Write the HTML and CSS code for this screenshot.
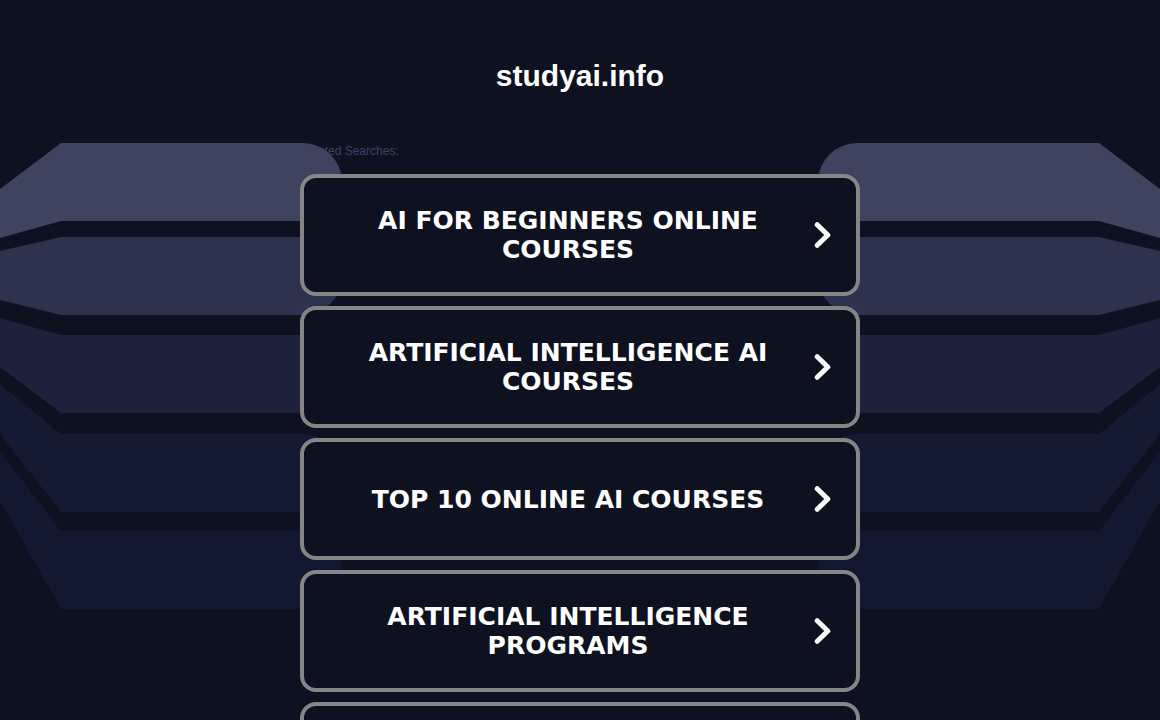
FILE: index.html
```
<!DOCTYPE html>
<html lang="en">

<head>
    <meta charset="UTF-8">
    <meta name="viewport" content="width=device-width, initial-scale=1.0">
    <title>studyai.info</title>
    <link rel="stylesheet" href="styles.css">
</head>

<body>
    <header class="header">
        <h1>studyai.info</h1>
    </header>

    <main class="main">
        <svg class="arrows arrows-left" viewBox="0 0 342 468" aria-hidden="true">
            <g id="bands">
                <path fill="#3e4460" d="M0 46 L61 0 H303 A39 39 0 0 1 303 78 H61 L0 95 Z"/>
                <path fill="#2d334e" d="M0 108 L61 94 H303 A39 39 0 0 1 303 172 H61 L0 157 Z"/>
                <path fill="#1d213b" d="M0 175 L61 192 H303 A39 39 0 0 1 303 270 H61 L0 224 Z"/>
                <path fill="#141a32" d="M0 241 L61 291 H303 A39 39 0 0 1 303 369 H61 L0 291 Z"/>
                <path fill="#12182f" d="M0 308 L61 388 H303 A39 39 0 0 1 303 466 H61 L0 358 Z"/>
            </g>
        </svg>
        <svg class="arrows arrows-right" viewBox="0 0 342 468" aria-hidden="true">
            <use href="#bands" transform="matrix(-1 0 0 1 342 0)"/>
        </svg>

        <section class="searches">
            <h2>Related Searches:</h2>
            <a class="card" href="#">
                <span>AI FOR BEGINNERS ONLINE COURSES</span>
                <svg class="chevron" viewBox="0 0 18 28" aria-hidden="true"><path d="M3.2 3.7 L13.8 14 L3.2 24.3"/></svg>
            </a>
            <a class="card" href="#">
                <span>ARTIFICIAL INTELLIGENCE AI COURSES</span>
                <svg class="chevron" viewBox="0 0 18 28" aria-hidden="true"><path d="M3.2 3.7 L13.8 14 L3.2 24.3"/></svg>
            </a>
            <a class="card" href="#">
                <span>TOP 10 ONLINE AI COURSES</span>
                <svg class="chevron" viewBox="0 0 18 28" aria-hidden="true"><path d="M3.2 3.7 L13.8 14 L3.2 24.3"/></svg>
            </a>
            <a class="card" href="#">
                <span>ARTIFICIAL INTELLIGENCE PROGRAMS</span>
                <svg class="chevron" viewBox="0 0 18 28" aria-hidden="true"><path d="M3.2 3.7 L13.8 14 L3.2 24.3"/></svg>
            </a>
            <a class="card" href="#" aria-label="More searches"></a>
        </section>
    </main>
</body>

</html>
```

FILE: styles.css
```
* {
    box-sizing: border-box;
}

body {
    margin: 0;
    background-color: #0e1120;
    color: #fff;
    font-family: "Liberation Sans", Arial, sans-serif;
    overflow-x: hidden;
}

/* the page scrolls, but without a visible bar */
html {
    scrollbar-width: none;
}

.header {
    padding: 58px 20px 49px;
    text-align: center;
}

h1 {
    margin: 0;
    font-size: 30px;
    line-height: 36px;
}

.main {
    position: relative;
}

/* decoration behind the cards, one on each side */
.arrows {
    position: absolute;
    top: 0;
    width: 342px;
    height: 468px;
}

.arrows-left {
    left: 0;
}

.arrows-right {
    right: 0;
}

.searches {
    position: relative;
    max-width: 560px;
    margin: 0 auto;
}

h2 {
    margin: 0;
    padding: 2px 0 17px;
    color: #3e4460;
    font-size: 12px;
    font-weight: normal;
    line-height: 12px;
}

.card {
    display: flex;
    align-items: center;
    height: 122px;
    margin-bottom: 10px;
    padding: 0 24px 0 30px;
    border: 4px solid #858586;
    border-radius: 16px;
    background-color: #0e1120;
    color: #fff;
    font-family: Verdana, "DejaVu Sans", sans-serif;
    font-size: 25px;
    font-weight: bold;
    line-height: 29px;
    text-align: center;
    text-decoration: none;
}

.card span {
    flex: 1;
    padding-right: 12px;
}

.chevron {
    flex: none;
    width: 18px;
    height: 28px;
    fill: none;
    stroke: #fff;
    stroke-width: 5;
    stroke-linecap: round;
    stroke-linejoin: round;
}
```
